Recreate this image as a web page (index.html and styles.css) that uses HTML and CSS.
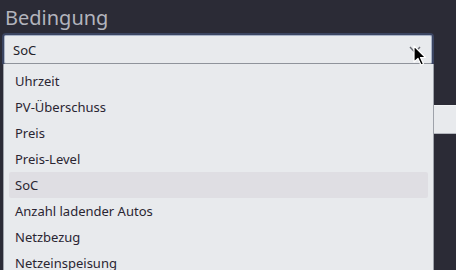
FILE: index.html
```html
<!DOCTYPE html>
<html lang="de">
<head>
    <meta charset="UTF-8">
    <meta name="viewport" content="width=device-width, initial-scale=1.0">
    <title>Bedingung</title>
    <link rel="stylesheet" href="styles.css">
</head>
<body>
    <main class="form">
        <label class="field-label" for="condition">Bedingung</label>
        <div class="select-wrap">
            <div class="select" id="condition">
                <span class="select-value">SoC</span>
                <svg class="chevron" width="12" height="8" viewBox="0 0 12 8">
                    <path d="M1 1 L6 6.5 L11 1" fill="none" stroke="#6b6d75" stroke-width="1.4"/>
                </svg>
            </div>

            <ul class="dropdown">
                <li class="option">Uhrzeit</li>
                <li class="option">PV-Überschuss</li>
                <li class="option">Preis</li>
                <li class="option">Preis-Level</li>
                <li class="option selected">SoC</li>
                <li class="option">Anzahl ladender Autos</li>
                <li class="option">Netzbezug</li>
                <li class="option">Netzeinspeisung</li>
            </ul>

            <!-- mouse pointer over the select arrow -->
            <svg class="cursor" width="14" height="22" viewBox="0 0 14 22">
                <path d="M1 1 L1 17 L5 13.5 L8 20 L10.5 19 L7.5 12.5 L12.5 12.5 Z" fill="#000" stroke="#fff" stroke-width="1.2" stroke-linejoin="round"/>
            </svg>
        </div>

        <div class="next-input"></div>
    </main>
</body>
</html>
```

FILE: styles.css
```css
html {
    height: 100%;
    overflow: hidden;
}

body {
    margin: 0;
    padding: 0;
    height: 100%;
    background-color: #2b2b36;
    font-family: 'Noto Sans', 'Open Sans', sans-serif;
}

.form {
    padding: 4px 0 0 4px;
}

.field-label {
    display: block;
    padding-left: 1px;
    font-size: 20px;
    line-height: 28px;
    color: #b3b4bd;
}

.select-wrap {
    position: relative;
    width: 428px;
    margin-top: 3px;
}

.select {
    display: flex;
    align-items: center;
    justify-content: space-between;
    height: 27px;
    padding: 0 10px 0 8px;
    background-color: #e8eaed;
    border: 1px solid #a9b3c6;
    border-bottom-color: #8f939b;
    border-radius: 2px;
    box-shadow: 0 0 0 2px #3b4562;
}

.select-value {
    font-size: 13px;
    color: #24222b;
}

.chevron {
    display: block;
}

.dropdown {
    position: absolute;
    top: 29px;
    left: -1px;
    width: 419px;
    height: 206px;
    margin: 0;
    padding: 4px 5px 0;
    list-style: none;
    background-color: #e8eaed;
    border-left: 1px solid #9ea2aa;
    border-right: 1px solid #9ea2aa;
    overflow: hidden;
    z-index: 2;
}

.option {
    height: 26px;
    line-height: 26px;
    padding: 0 6px;
    font-size: 13px;
    color: #2a2532;
    border-radius: 2px;
}

.option.selected {
    background-color: #dfdee3;
}

.cursor {
    position: absolute;
    top: 10px;
    left: 409px;
    z-index: 3;
}

.next-input {
    height: 27px;
    margin-top: 41px;
    margin-right: -10px;
    background-color: #e8eaed;
    border-top: 1px solid #f0f2f4;
    border-bottom: 1px solid #b3b6bd;
}
```
